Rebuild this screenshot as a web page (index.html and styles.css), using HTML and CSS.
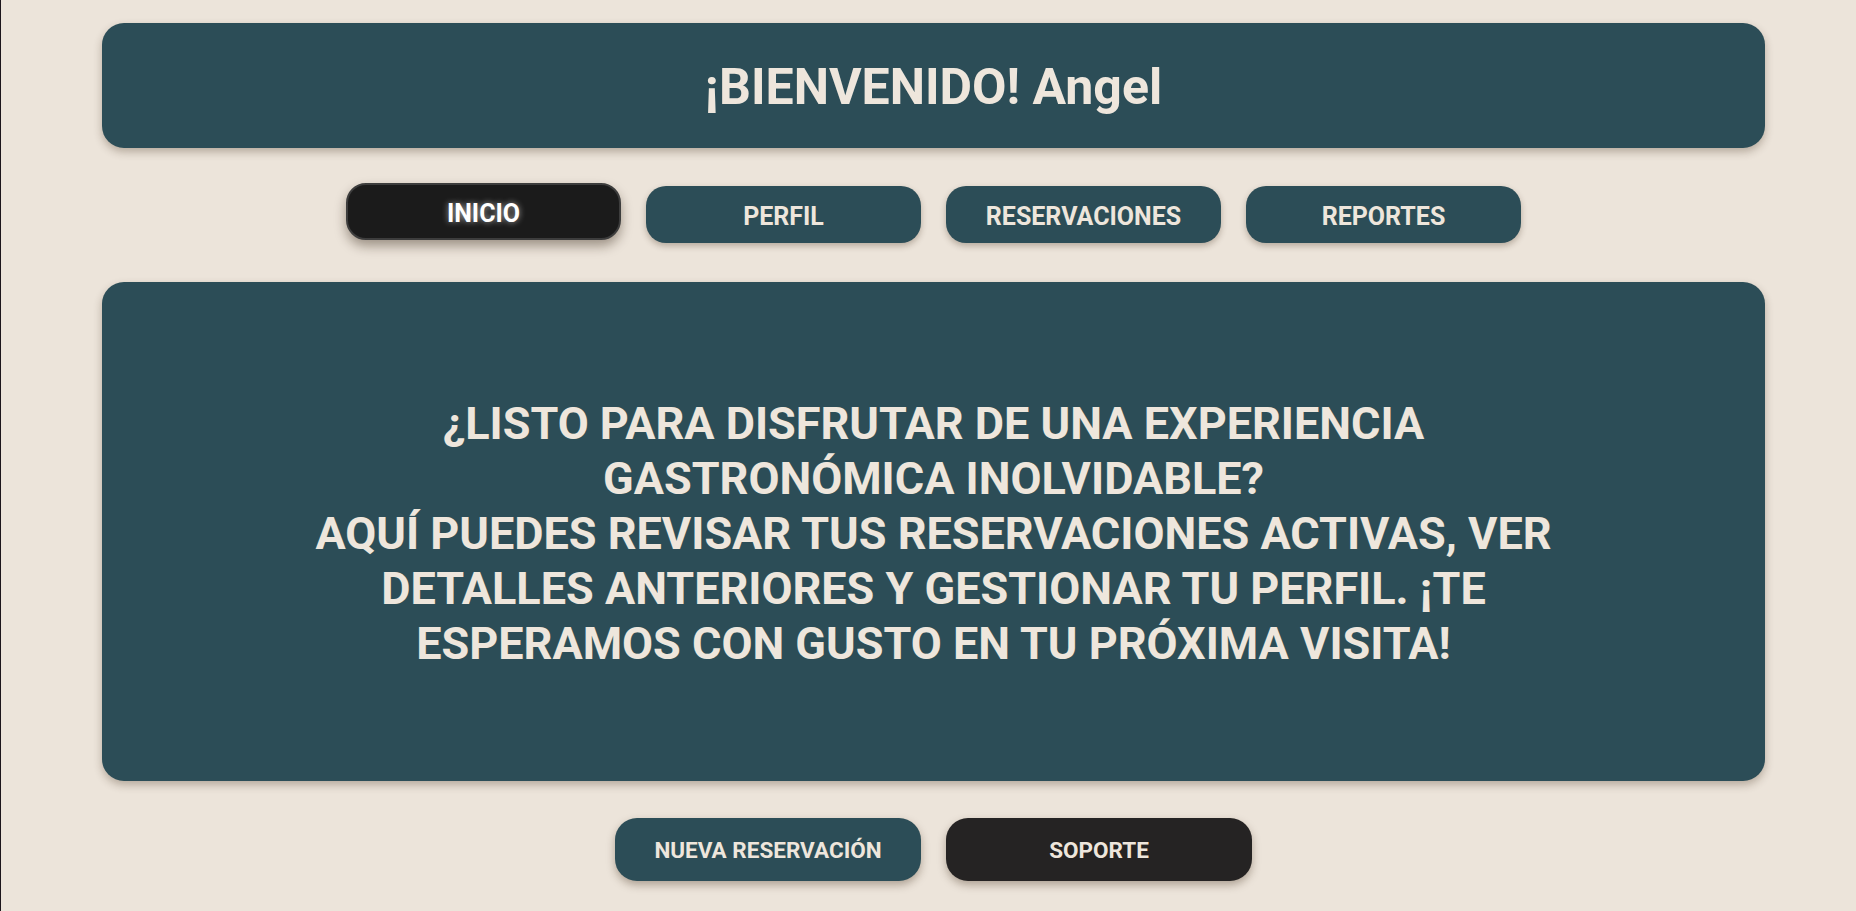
FILE: index.html
```html
<!DOCTYPE html>
<html lang="es">
<head>
<meta charset="utf-8">
<title>Inicio</title>
<link rel="stylesheet" href="styles.css">
</head>
<body>
<div class="page">
  <header class="welcome">
    <h1 class="welcome-title">¡BIENVENIDO! Angel</h1>
  </header>
  <nav class="nav">
    <button class="nav-btn active">INICIO</button>
    <button class="nav-btn">PERFIL</button>
    <button class="nav-btn">RESERVACIONES</button>
    <button class="nav-btn">REPORTES</button>
  </nav>
  <main class="panel">
    <p class="panel-text">¿LISTO PARA DISFRUTAR DE UNA EXPERIENCIA GASTRONÓMICA INOLVIDABLE?<br>AQUÍ PUEDES REVISAR TUS RESERVACIONES ACTIVAS, VER DETALLES ANTERIORES Y GESTIONAR TU PERFIL. ¡TE ESPERAMOS CON GUSTO EN TU PRÓXIMA VISITA!</p>
  </main>
  <div class="actions">
    <button class="action-btn primary">NUEVA RESERVACIÓN</button>
    <button class="action-btn dark">SOPORTE</button>
  </div>
</div>
</body>
</html>
```
FILE: styles.css
```css
* { box-sizing: border-box; }
html, body { height: 100%; }
body {
  margin: 0;
  background: #ece4da;
  border-left: 1px solid #1c151c;
  font-family: Roboto, "Liberation Sans", sans-serif;
  color: #eee6dc;
}
.page {
  padding: 23px 91px 0 101px;
}
.welcome {
  height: 125px;
  background: #2c4d57;
  border-radius: 22px;
  box-shadow: 0 4px 8px rgba(60, 40, 20, 0.3);
  display: flex;
  align-items: center;
  justify-content: center;
}
.welcome-title {
  margin: 0;
  font-size: 50px;
  font-weight: 700;
  color: #eee6dc;
  padding-top: 2px;
}
.nav {
  display: flex;
  justify-content: center;
  gap: 25px;
  margin-top: 38px;
  margin-bottom: 39px;
}
.nav-btn, .action-btn {
  font-family: Roboto, "Liberation Sans", sans-serif;
  font-weight: 700;
  color: #eee6dc;
  border: none;
  cursor: pointer;
}
.nav-btn {
  width: 275px;
  height: 57px;
  border-radius: 20px;
  background: #2c4d57;
  font-size: 25px;
  padding-top: 4px;
  box-shadow: 0 3px 6px rgba(60, 40, 20, 0.3);
}
.nav-btn.active {
  background: #1b1b1b;
  border: 2px solid #3d3d3d;
  color: #ffffff;
  transform: translateY(-3px);
  text-shadow: 0 0 6px rgba(255, 255, 255, 0.6);
  box-shadow: 0 6px 12px rgba(40, 25, 10, 0.4);
}
.panel {
  height: 499px;
  background: #2c4d57;
  border-radius: 22px;
  box-shadow: 0 4px 8px rgba(60, 40, 20, 0.3);
  display: flex;
  align-items: center;
  justify-content: center;
  padding: 4px 150px 0;
}
.panel-text {
  margin: 0;
  max-width: 1280px;
  text-align: center;
  font-size: 45px;
  line-height: 55px;
  font-weight: 700;
  color: #eee6dc;
}
.actions {
  display: flex;
  justify-content: center;
  gap: 25px;
  margin-top: 37px;
}
.action-btn {
  width: 306px;
  height: 63px;
  border-radius: 22px;
  font-size: 22.5px;
  padding-top: 1px;
  box-shadow: 0 4px 8px rgba(60, 40, 20, 0.35);
}
.action-btn.primary { background: #2c4d57; }
.action-btn.dark { background: #252323; }
```
